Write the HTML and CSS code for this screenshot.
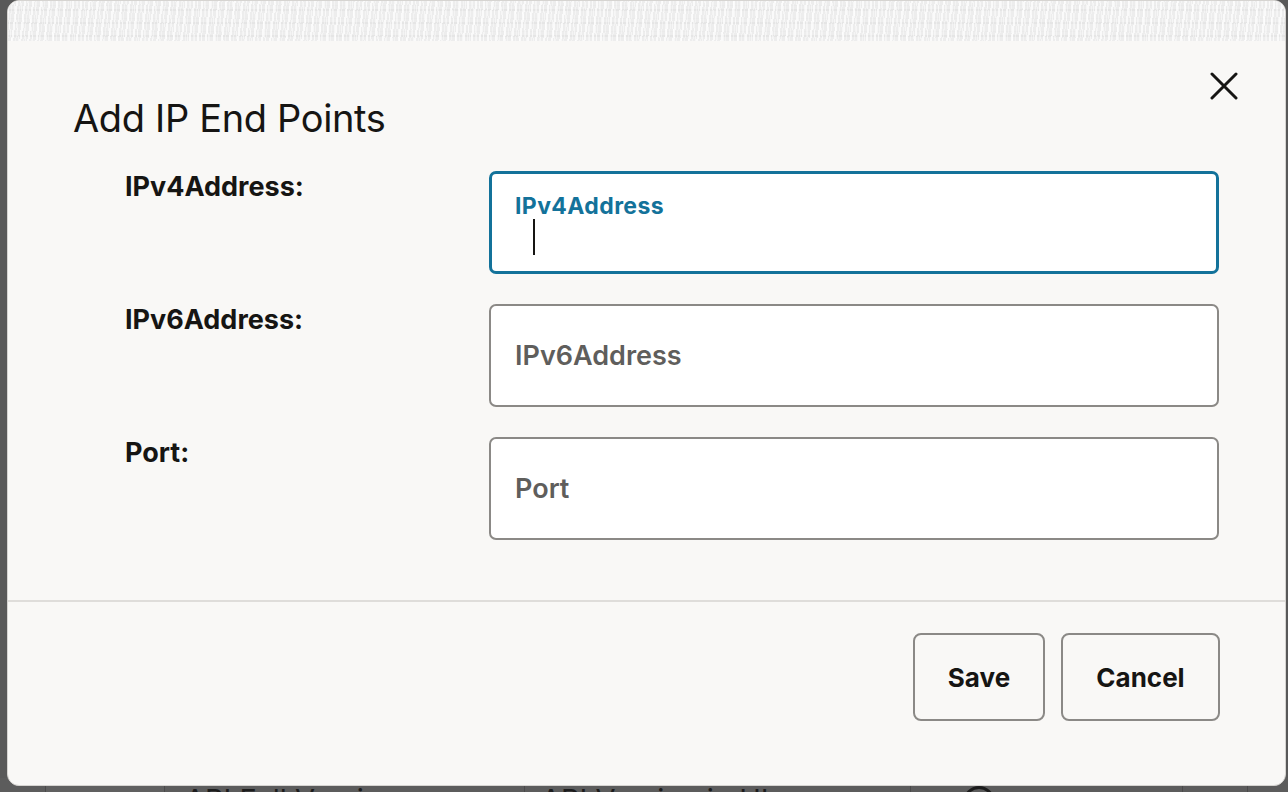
FILE: index.html
```html
<!DOCTYPE html>
<html lang="en">
<head>
  <meta charset="UTF-8">
  <meta name="viewport" content="width=device-width, initial-scale=1.0">
  <title>Add IP End Points</title>
  <link rel="stylesheet" href="styles.css">
</head>
<body>
  <div id="page">
    <div class="page-row">
      <div class="cell cell-first"></div>
      <div class="cell cell-full">API Full Version <span class="caret">&#9662;</span></div>
      <div class="cell cell-ui">API Version in UI <span class="caret">&#9662;</span></div>
      <div class="cell cell-icon"><span class="ring"></span></div>
      <div class="cell cell-last"></div>
    </div>
  </div>

  <div id="dialog" role="dialog" aria-labelledby="dialog-title">
    <div class="dialog-texture"></div>
    <div class="dialog-header">
      <h1 id="dialog-title">Add IP End Points</h1>
      <button class="close-button" aria-label="Close">
        <svg width="28" height="28" viewBox="0 0 28 28">
          <path d="M2 2 L26 26 M26 2 L2 26" stroke="#161513" stroke-width="3" stroke-linecap="round" fill="none"/>
        </svg>
      </button>
    </div>

    <form class="dialog-body">
      <label class="field-label" for="ipv4">IPv4Address:</label>
      <div class="field field-focused">
        <span class="float-label">IPv4Address</span>
        <input id="ipv4" type="text">
        <span class="text-cursor"></span>
      </div>

      <label class="field-label" for="ipv6">IPv6Address:</label>
      <div class="field">
        <input id="ipv6" type="text" placeholder="IPv6Address">
      </div>

      <label class="field-label" for="port">Port:</label>
      <div class="field">
        <input id="port" type="text" placeholder="Port">
      </div>
    </form>

    <div class="dialog-footer">
      <button class="footer-button save-button">Save</button>
      <button class="footer-button cancel-button">Cancel</button>
    </div>
  </div>
</body>
</html>
```

FILE: styles.css
```css
body {
  margin: 0;
  height: 792px;
  overflow: hidden;
  background-color: #595959;
  font-family: Inter, "Noto Sans", Arial, sans-serif;
  color: #161513;
}

#page {
  height: 792px;
  display: flex;
  flex-direction: column;
  justify-content: flex-end;
}

.page-row {
  display: flex;
  height: 44px;
  margin-bottom: -30px;
  padding-left: 45px;
  background-color: #5c5c5c;
}

.cell {
  box-sizing: border-box;
  border-left: 1px solid #4a4a4a;
  font-size: 29px;
  line-height: 44px;
  color: #1c1c1c;
  white-space: nowrap;
  overflow: hidden;
}

.cell-first { width: 119px; background-color: #606060; }
.cell-full { width: 360px; padding-left: 20px; }
.cell-ui { width: 386px; padding-left: 16px; }
.cell-icon { width: 272px; padding-left: 52px; }
.cell-last { width: 66px; border-right: 1px solid #4a4a4a; }

.caret {
  margin-left: 30px;
  font-size: 22px;
}

.ring {
  display: inline-block;
  width: 26px;
  height: 26px;
  border: 3px solid #1c1c1c;
  border-radius: 50%;
  margin-top: 8px;
}

/* dialog */

#dialog {
  position: absolute;
  left: 7px;
  top: 0;
  width: 1277px;
  height: 784px;
  display: flex;
  flex-direction: column;
  background-color: #f9f8f6;
  border: 1px solid #d6d4d1;
  border-radius: 12px;
  overflow: hidden;
}

.dialog-texture {
  height: 40px;
  flex-shrink: 0;
  background-color: #ededed;
  background-image:
    repeating-linear-gradient(97deg, rgba(255,255,255,0.75) 0 2px, transparent 2px 4px, rgba(255,255,255,0.4) 4px 5px, transparent 5px 8px),
    repeating-linear-gradient(83deg, transparent 0 3px, rgba(255,255,255,0.5) 3px 4px, transparent 4px 7px),
    repeating-linear-gradient(0deg, transparent 0 4px, rgba(226,226,226,0.7) 4px 6px, transparent 6px 9px, rgba(232,232,232,0.6) 9px 10px, transparent 10px 13px);
}

.dialog-header {
  display: flex;
  justify-content: space-between;
  align-items: flex-start;
  padding: 0 46px 0 65px;
}

#dialog-title {
  margin: 55px 0 0;
  font-size: 38px;
  font-weight: 400;
  line-height: 44px;
  letter-spacing: -0.35px;
}

.close-button {
  margin-top: 30px;
  padding: 0;
  width: 30px;
  height: 30px;
  border: none;
  background: none;
  display: flex;
  align-items: center;
  justify-content: center;
}

.dialog-body {
  display: grid;
  grid-template-columns: 364px 730px;
  row-gap: 30px;
  padding: 31px 0 0 117px;
}

.field-label {
  padding-top: 1px;
  font-size: 27px;
  font-weight: 700;
  line-height: 30px;
}

.field {
  position: relative;
  height: 99px;
  border: 2px solid #8b8986;
  border-radius: 7px;
  background-color: #fff;
  display: flex;
  align-items: center;
}

.field input {
  width: 100%;
  height: 100%;
  box-sizing: border-box;
  padding: 0 24px;
  border: none;
  border-radius: 7px;
  background: transparent;
  font-family: inherit;
  font-size: 27px;
  font-weight: 600;
  color: #161513;
  outline: none;
}

.field input::placeholder {
  color: #5f5e5c;
}

.field-focused {
  height: 97px;
  border: 3px solid #13729a;
}

.float-label {
  position: absolute;
  left: 23px;
  top: 18px;
  font-size: 23px;
  font-weight: 700;
  letter-spacing: 0.4px;
  color: #13729a;
}

.text-cursor {
  position: absolute;
  left: 41px;
  top: 45px;
  width: 2px;
  height: 36px;
  background-color: #161513;
}

.dialog-footer {
  margin-top: auto;
  height: 185px;
  box-sizing: border-box;
  border-top: 2px solid #dfddda;
  display: flex;
  justify-content: flex-end;
  align-items: flex-start;
  gap: 16px;
  padding: 31px 65px 0 0;
}

.footer-button {
  height: 88px;
  padding: 0 20px;
  border: 2px solid #8b8986;
  border-radius: 8px;
  background-color: #f9f8f6;
  font-family: inherit;
  font-size: 26px;
  font-weight: 700;
  color: #161513;
}

.save-button { width: 132px; }
.cancel-button { width: 159px; }
```
